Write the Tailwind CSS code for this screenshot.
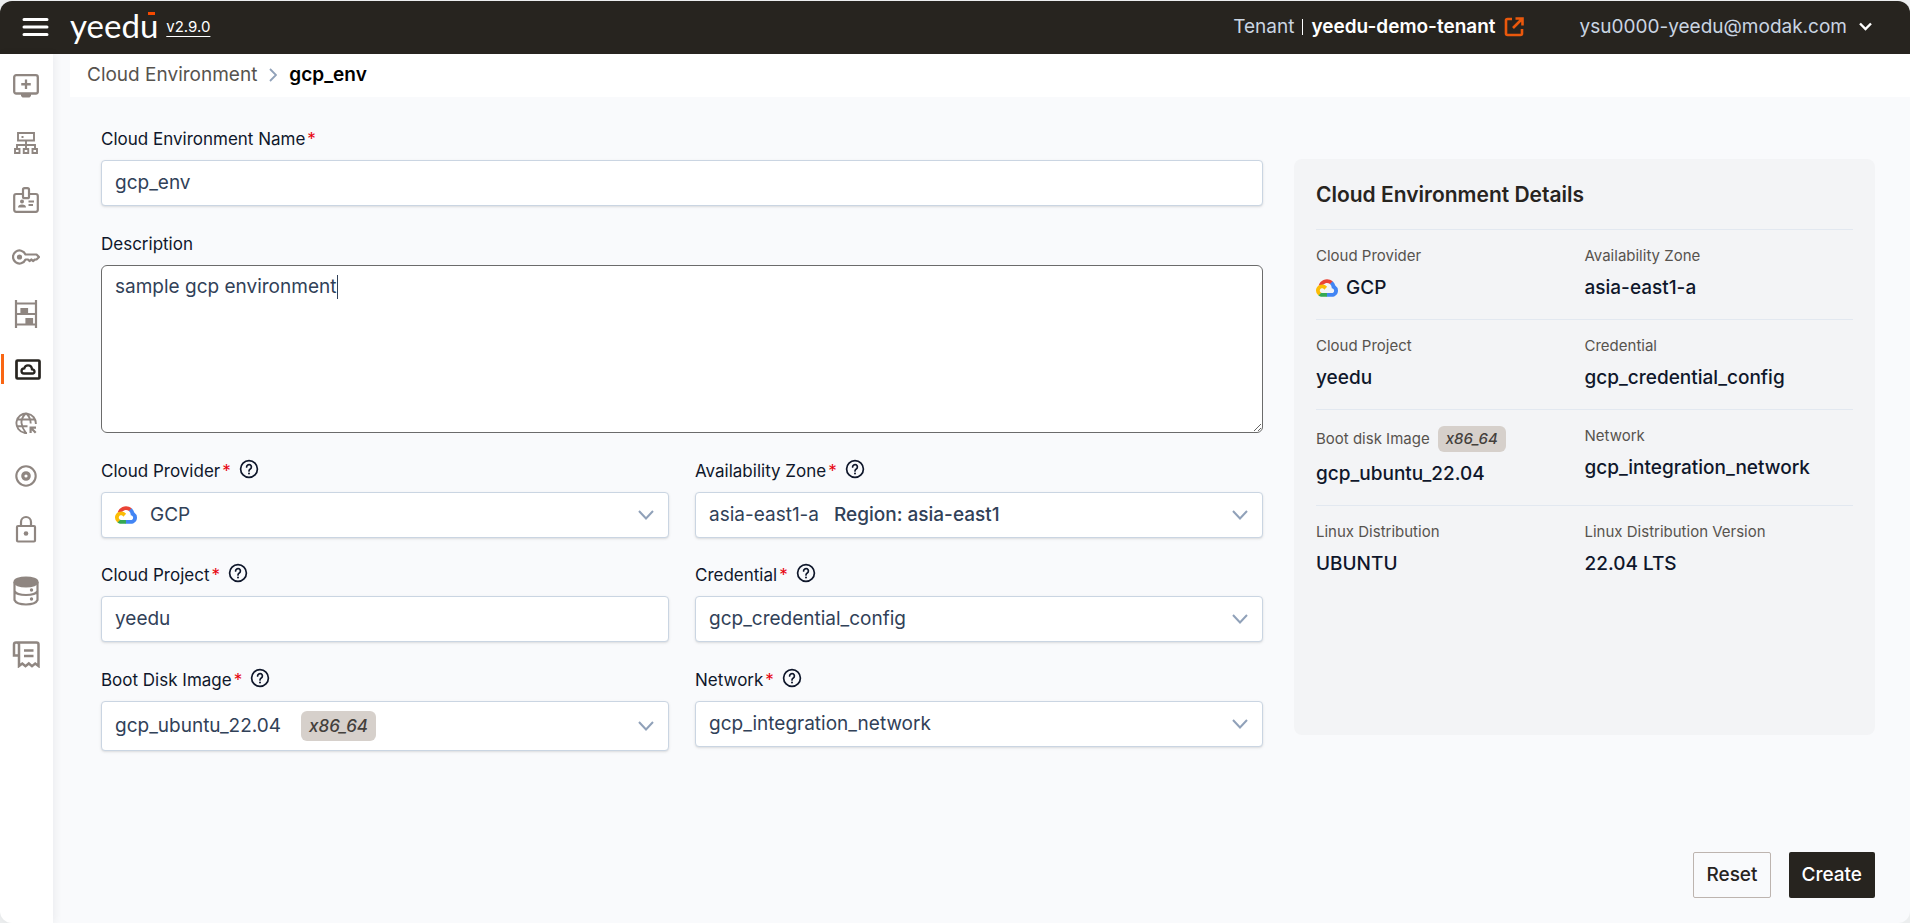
<!DOCTYPE html>
<html lang="en">
<head>
<meta charset="utf-8">
<meta name="viewport" content="width=device-width, initial-scale=1">
<title>yeedu - Cloud Environment</title>
<script src="https://cdn.jsdelivr.net/npm/@tailwindcss/browser@4"></script>
</head>
<body class="bg-[#eceeef] font-['Inter',sans-serif] text-slate-900">
<svg class="hidden" aria-hidden="true">
  <symbol id="help" viewBox="0 0 20 20"><g fill="none" stroke="currentColor" stroke-width="1.7" stroke-linecap="round"><circle cx="10" cy="10" r="8.4"/><path d="M7.600 8a2.400 2.400 0 1 1 3.700 2c-.9.6-1.300 1-1.300 1.900"/></g><circle cx="10" cy="14.400" r="1" fill="currentColor"/></symbol>
  <symbol id="down" viewBox="0 0 16 10"><path d="M1 1l7 7.500 7-7.500" fill="none" stroke="currentColor" stroke-width="2"/></symbol>
  <symbol id="gcp" viewBox="0 0 256 206"><path fill="#EA4335" d="M170.252 56.819l22.253-22.253 1.483-9.370C153.437-11.677 88.976-7.496 52.420 33.920 42.267 45.423 34.734 59.764 30.717 74.573l7.970-1.123 44.505-7.340 3.436-3.513c19.797-21.742 53.270-24.667 76.128-6.168l7.496.39z"/><path fill="#4285F4" d="M224.205 73.918a100.249 100.249 0 0 0-30.217-48.722l-31.232 31.232a55.515 55.515 0 0 1 20.379 44.037v5.544c15.350 0 27.797 12.450 27.797 27.796 0 15.352-12.446 27.573-27.797 27.573h-55.671l-5.466 5.934v33.340l5.466 5.231h55.670c39.930.311 72.553-31.494 72.864-71.424a72.303 72.303 0 0 0-31.793-60.541"/><path fill="#34A853" d="M71.870 205.796h55.593V161.290H71.870a27.275 27.275 0 0 1-11.400-2.498l-7.887 2.420-22.409 22.253-1.952 7.574c12.567 9.489 27.900 14.825 43.648 14.757"/><path fill="#FBBC05" d="M71.870 61.425C31.940 61.663-.237 94.228.001 134.158a72.301 72.301 0 0 0 28.222 56.880l32.248-32.246c-13.990-6.322-20.208-22.786-13.887-36.776 6.320-13.990 22.786-20.208 36.775-13.888a27.796 27.796 0 0 1 13.887 13.888l32.248-32.248A72.224 72.224 0 0 0 71.870 61.425"/></symbol>
</svg>
<div class="flex min-h-screen flex-col pt-px">
  <header class="flex h-[53px] items-center rounded-t-xl bg-[#27241f] pb-0.5 pl-[22px] pr-[38px] text-[19px] leading-7 text-slate-300">
    <button aria-label="Menu" class="text-white"><svg class="h-5 w-[27px]" viewBox="0 0 27 20" fill="none" stroke="currentColor" stroke-width="3" stroke-linecap="round"><path d="M2 2.500h23M2 10h23M2 17.500h23"/></svg></button>
    <a href="#" class="relative ml-[21px] pb-0.5 font-['Lato',sans-serif] text-[33px] leading-none text-white">yeedu<span class="absolute right-[3px] top-[3px] h-[3px] w-[7px] bg-orange-600"></span></a>
    <a href="#" class="ml-2 text-[15px] leading-6 text-white underline underline-offset-4">v2.9.0</a>
    <div class="ml-auto flex items-center">
      <span>Tenant</span>
      <span class="mx-2 h-4 w-px bg-white"></span>
      <span class="font-semibold text-white">yeedu-demo-tenant</span>
      <a href="#" aria-label="Open tenant" class="ml-2 text-[#ea580c]"><svg class="size-5" viewBox="0 0 20 20" fill="none" stroke="currentColor" stroke-width="2.600"><path d="M8 2H3.500Q2 2 2 3.500v13Q2 18 3.500 18h13q1.500 0 1.500-1.500V12M11.500 1.500h7v7M18 2L9 11"/></svg></a>
      <button class="ml-14 flex items-center gap-3">ysu0000-yeedu@modak.com<svg class="h-[9px] w-[13px] text-white" viewBox="0 0 13 9" fill="none" stroke="currentColor" stroke-width="2.400"><path d="M1 1.500l5.500 5.500L12 1.500"/></svg></button>
    </div>
  </header>
  <div class="flex grow">
    <nav aria-label="Main" class="z-10 w-[53px] shrink-0 rounded-bl-xl bg-white pr-px pt-[3px] text-[#8f8681] shadow-[2px_0_8px_rgba(15,23,42,0.06)]">
      <ul>
        <li class="flex h-[57px] items-center justify-center"><a href="#" aria-label="Workspace"><svg class="h-6 w-[26px]" viewBox="0 0 26 24" fill="none" stroke="currentColor" stroke-width="2.300"><rect x="1.200" y="1.200" width="23.600" height="18.300" rx="2"/><path d="M13 5.500v9.500M8.250 10.250h9.500"/><path d="M8 20h10v2l-1.500 1.500h-7L8 22z" fill="currentColor" stroke="none"/></svg></a></li>
        <li class="flex h-[57px] items-center justify-center"><a href="#" aria-label="Clusters"><svg class="h-[22px] w-6" viewBox="0 0 24 22" fill="none" stroke="currentColor" stroke-width="1.900"><path d="M4 1h16v7.500H4zM12 8.500V17M3 17v-4h18v4M1 17h4.500v4H1zM9.750 17h4.500v4h-4.500zM18.500 17H23v4h-4.500z"/><path d="M7.500 4h2v2h-2z" fill="currentColor" stroke="none"/></svg></a></li>
        <li class="flex h-[57px] items-center justify-center"><a href="#" aria-label="Credentials"><svg class="h-[26px] w-[26px]" viewBox="0 0 26 26" fill="none" stroke="currentColor" stroke-width="2.200"><path d="M10 7H3.200q-2 0-2 2v13.800q0 2 2 2h19.600q2 0 2-2V9q0-2-2-2H16"/><rect x="10" y="1.200" width="6" height="10" rx="1.500"/><path d="M15.500 14.500H21M15.500 18H20" stroke-width="1.800"/><circle cx="9" cy="14.500" r="2" fill="currentColor" stroke="none"/><path d="M5 20.500q0-3 4-3t4 3z" fill="currentColor" stroke="none"/></svg></a></li>
        <li class="flex h-[57px] items-center justify-center"><a href="#" aria-label="Keys"><svg class="h-4 w-7" viewBox="0 0 28 16" fill="none" stroke="currentColor" stroke-width="2.200" stroke-linejoin="round"><path d="M13.500 5.500A6.500 6.500 0 1 0 13.500 10.500H16l1.500 1.500 2-1.500 1.500 1.500 2-1.500h1.500L27 8l-2.500-2.500z"/><circle cx="7.500" cy="8" r="2.600" fill="currentColor" stroke="none"/></svg></a></li>
        <li class="flex h-[57px] items-center justify-center"><a href="#" aria-label="Object storage"><svg class="h-7 w-6" viewBox="0 0 24 28" fill="none" stroke="currentColor" stroke-width="2.200"><path d="M2 0v28M22 0v28M2 3.500h20M2 14h20M2 24.500h20"/><path d="M7.500 9h5.500v5H7.500zM12.500 19h5.500v5h-5.500z" fill="currentColor"/></svg></a></li>
        <li class="relative flex h-[54px] items-center justify-center pl-1 text-[#27241f]"><span class="absolute left-px h-[30px] w-[3px] bg-[#f96613]"></span><a href="#" aria-label="Cloud environments" aria-current="page"><svg class="h-[21px] w-[26px]" viewBox="0 0 26 21" fill="none" stroke="currentColor" stroke-width="2.700"><rect x="1.500" y="1.500" width="23" height="18" rx="1"/><path d="M9 14.500h8.500q2 0 2-2t-2.500-2.200q-.3-4-4-4-3 0-3.700 3Q6.500 9.500 6.500 12 6.500 14.500 9 14.500z" stroke-width="2.300"/></svg></a></li>
        <li class="flex h-[54px] items-center justify-center"><a href="#" aria-label="Networks"><svg class="size-[22px]" viewBox="0 0 22 22" fill="none" stroke="currentColor" stroke-width="1.900"><path d="M12 21Q10.500 21.200 9.500 20.800A9.700 9.700 0 1 1 20.800 12M2 7.500h18M1.500 14.200h11M11 1.300Q6 6 6.500 11T11 21M11 1.300Q15.500 5 15.700 11.500"/><path d="M14.500 14.500h6.500v2.200h-2.700l3.200 3.200-1.600 1.600-3.200-3.200v2.700h-2.200z" fill="currentColor" stroke="none"/></svg></a></li>
        <li class="flex h-[52px] items-center justify-center"><a href="#" aria-label="Boot disk images"><svg class="size-[22px]" viewBox="0 0 22 22" fill="none" stroke="currentColor"><circle cx="11" cy="11" r="9.700" stroke-width="2.100"/><circle cx="11" cy="11" r="3.200" stroke-width="3.200"/></svg></a></li>
        <li class="flex h-[54px] items-center justify-center"><a href="#" aria-label="Secrets"><svg class="h-7 w-[22px]" viewBox="0 0 22 28" fill="none" stroke="currentColor" stroke-width="2.200"><rect x="2" y="11" width="18" height="15.500" rx="1"/><path d="M6 11V7a5 5 0 0 1 10 0v4"/><circle cx="11" cy="18.500" r="2.300" fill="currentColor" stroke="none"/></svg></a></li>
        <li class="flex h-[70px] items-center justify-center"><a href="#" aria-label="Metastore"><svg class="h-[30px] w-[26px]" viewBox="0 0 26 30" fill="none" stroke="currentColor" stroke-width="2.200"><ellipse cx="13" cy="6" rx="11.500" ry="4.500" fill="currentColor"/><path d="M1.500 6v18q2 4.500 11.500 4.500T24.500 24V6M1.500 15q2 4 11.500 4t11.500-4"/><circle cx="18.500" cy="14" r="1.700" fill="currentColor" stroke="none"/><circle cx="18.500" cy="23" r="1.700" fill="currentColor" stroke="none"/></svg></a></li>
        <li class="flex h-14 items-center justify-center"><a href="#" aria-label="Billing"><svg class="h-[27px] w-7" viewBox="0 0 28 27" fill="none" stroke="currentColor" stroke-width="2.500"><path d="M7 14.500H2V3.500Q2 1.500 4 1.500h20.500q2 0 2 2V25l-3.300-2.500-3.200 2.700-3.200-2.700-3.300 2.700-3.200-2.700L7 25V3.500q0-2-2.500-2"/><path d="M12 9.500h9.500M12 15h9.500"/></svg></a></li>
      </ul>
    </nav>
    <main class="flex min-w-0 grow flex-col rounded-br-xl bg-[#f9fafc] pl-[17px]">
      <nav aria-label="Breadcrumb" class="flex h-[43px] items-center bg-white pb-0.5 pl-[17px] text-[19px] leading-7">
        <a href="#" class="text-[#57534e]">Cloud Environment</a>
        <svg class="mx-3 h-[14px] w-2 text-slate-400" viewBox="0 0 8 14" fill="none" stroke="currentColor" stroke-width="1.800"><path d="M1 1l6 6-6 6"/></svg>
        <span class="font-semibold text-black">gcp_env</span>
      </nav>
      <form class="flex grow flex-col pb-[25px] pl-[31px] pr-[35px] pt-[30px]">
        <div class="grid grid-cols-[2fr_1fr] items-start gap-[31px]">
          <div class="grid grid-cols-2 items-start gap-[26px] text-[19px] leading-7 text-slate-700">
            <div class="col-span-2 flex flex-col gap-[9px]">
              <label for="name" class="flex h-6 items-center gap-0.5 text-[17px] leading-6 text-slate-900">Cloud Environment Name <span class="text-red-600">*</span></label>
              <input id="name" type="text" value="gcp_env" class="h-[46px] w-full rounded border border-slate-300 bg-white px-[13px] pb-0.5 shadow-sm">
            </div>
            <div class="col-span-2 flex flex-col gap-[9px]">
              <label for="desc" class="flex h-6 items-center text-[17px] leading-6 text-slate-900">Description</label>
              <div class="relative flex">
                <textarea id="desc" class="h-[168px] w-full resize-y rounded-md border border-[#6b6b6b] bg-white px-[13px] py-[7px]">sample gcp environment</textarea>
                <span class="absolute left-[236px] top-[10px] h-6 w-px bg-slate-700"></span>
              </div>
            </div>
            <div class="flex flex-col gap-[9px]">
              <div class="flex h-6 items-start gap-2 text-[17px] leading-6 text-slate-900"><label for="provider" class="flex gap-0.5">Cloud Provider <span class="text-red-600">*</span></label><button type="button" aria-label="Help"><svg class="size-5"><use href="#help"/></svg></button></div>
              <div class="relative">
                <select id="provider" class="h-[46px] w-full appearance-none rounded border border-slate-300 bg-white pl-12 pr-10 shadow-sm"><option>GCP</option></select>
                <svg class="pointer-events-none absolute left-[14px] top-[13px] h-5 w-[22px]"><use href="#gcp"/></svg>
                <svg class="pointer-events-none absolute right-[15px] top-[18px] h-[10px] w-4 text-slate-400"><use href="#down"/></svg>
              </div>
            </div>
            <div class="flex flex-col gap-[9px]">
              <div class="flex h-6 items-start gap-2 text-[17px] leading-6 text-slate-900"><label for="zone" class="flex gap-0.5">Availability Zone <span class="text-red-600">*</span></label><button type="button" aria-label="Help"><svg class="size-5"><use href="#help"/></svg></button></div>
              <div class="relative">
                <select id="zone" class="h-[46px] w-full appearance-none rounded border border-slate-300 bg-white pl-[13px] pr-10 shadow-sm"><option>asia-east1-a</option></select>
                <span class="pointer-events-none absolute left-[139px] top-[9px] font-medium">Region: asia-east1</span>
                <svg class="pointer-events-none absolute right-[15px] top-[18px] h-[10px] w-4 text-slate-400"><use href="#down"/></svg>
              </div>
            </div>
            <div class="-mt-px flex flex-col gap-[9px]">
              <div class="flex h-6 items-start gap-2 text-[17px] leading-6 text-slate-900"><label for="project" class="flex gap-0.5">Cloud Project <span class="text-red-600">*</span></label><button type="button" aria-label="Help"><svg class="size-5"><use href="#help"/></svg></button></div>
              <input id="project" type="text" value="yeedu" class="h-[46px] w-full rounded border border-slate-300 bg-white px-[13px] pb-0.5 shadow-sm">
            </div>
            <div class="-mt-px flex flex-col gap-[9px]">
              <div class="flex h-6 items-start gap-2 text-[17px] leading-6 text-slate-900"><label for="credential" class="flex gap-0.5">Credential <span class="text-red-600">*</span></label><button type="button" aria-label="Help"><svg class="size-5"><use href="#help"/></svg></button></div>
              <div class="relative">
                <select id="credential" class="h-[46px] w-full appearance-none rounded border border-slate-300 bg-white pl-[13px] pr-10 shadow-sm"><option>gcp_credential_config</option></select>
                <svg class="pointer-events-none absolute right-[15px] top-[18px] h-[10px] w-4 text-slate-400"><use href="#down"/></svg>
              </div>
            </div>
            <div class="flex flex-col gap-[9px]">
              <div class="flex h-6 items-start gap-2 text-[17px] leading-6 text-slate-900"><label for="image" class="flex gap-0.5">Boot Disk Image <span class="text-red-600">*</span></label><button type="button" aria-label="Help"><svg class="size-5"><use href="#help"/></svg></button></div>
              <div class="relative">
                <select id="image" class="h-[50px] w-full appearance-none rounded border border-slate-300 bg-white pl-[13px] pr-10 shadow-sm"><option>gcp_ubuntu_22.04</option></select>
                <span class="pointer-events-none absolute left-[200px] top-[10px] flex h-[30px] items-center rounded-md bg-[#d6d0cb] px-2 text-[17px] font-medium italic text-[#44403c]">x86_64</span>
                <svg class="pointer-events-none absolute right-[15px] top-5 h-[10px] w-4 text-slate-400"><use href="#down"/></svg>
              </div>
            </div>
            <div class="flex flex-col gap-[9px]">
              <div class="flex h-6 items-start gap-2 text-[17px] leading-6 text-slate-900"><label for="network" class="flex gap-0.5">Network <span class="text-red-600">*</span></label><button type="button" aria-label="Help"><svg class="size-5"><use href="#help"/></svg></button></div>
              <div class="relative">
                <select id="network" class="h-[46px] w-full appearance-none rounded border border-slate-300 bg-white pl-[13px] pr-10 shadow-sm"><option>gcp_integration_network</option></select>
                <svg class="pointer-events-none absolute right-[15px] top-[18px] h-[10px] w-4 text-slate-400"><use href="#down"/></svg>
              </div>
            </div>
          </div>
          <section class="mt-8 min-h-[576px] rounded-lg bg-[#f3f4f6] px-[22px] pt-5">
            <h2 class="pb-[18px] text-[21px] leading-8 font-semibold text-[#27241f]">Cloud Environment Details</h2>
            <dl class="divide-y divide-slate-200 border-t border-slate-200 text-[19px] leading-[30px] font-medium text-slate-900">
              <div class="grid grid-cols-2 pb-4 pt-[14px]">
                <div><dt class="text-[15px] leading-6 font-normal text-[#57534e]">Cloud Provider</dt><dd class="mt-[5px] flex items-center gap-2"><svg class="h-5 w-[22px]"><use href="#gcp"/></svg>GCP</dd></div>
                <div><dt class="text-[15px] leading-6 font-normal text-[#57534e]">Availability Zone</dt><dd class="mt-[5px]">asia-east1-a</dd></div>
              </div>
              <div class="grid grid-cols-2 pb-4 pt-[14px]">
                <div><dt class="text-[15px] leading-6 font-normal text-[#57534e]">Cloud Project</dt><dd class="mt-[5px]">yeedu</dd></div>
                <div><dt class="text-[15px] leading-6 font-normal text-[#57534e]">Credential</dt><dd class="mt-[5px]">gcp_credential_config</dd></div>
              </div>
              <div class="grid grid-cols-2 pb-4 pt-[14px]">
                <div><dt class="flex h-[30px] items-center gap-2 text-[15px] leading-[26px] font-normal text-[#57534e]">Boot disk Image <span class="rounded-md bg-[#d6d0cb] px-2 font-medium italic text-[#44403c]">x86_64</span></dt><dd class="mt-[5px]">gcp_ubuntu_22.04</dd></div>
                <div><dt class="text-[15px] leading-6 font-normal text-[#57534e]">Network</dt><dd class="mt-[5px]">gcp_integration_network</dd></div>
              </div>
              <div class="grid grid-cols-2 pb-4 pt-[14px]">
                <div><dt class="text-[15px] leading-6 font-normal text-[#57534e]">Linux Distribution</dt><dd class="mt-[5px]">UBUNTU</dd></div>
                <div><dt class="text-[15px] leading-6 font-normal text-[#57534e]">Linux Distribution Version</dt><dd class="mt-[5px]">22.04 LTS</dd></div>
              </div>
            </dl>
          </section>
        </div>
        <div class="mt-auto flex justify-end gap-[18px] pt-8 text-[19px] leading-7 font-medium">
          <button type="reset" class="h-[46px] rounded-xs border border-[#bdb4af] px-3 text-[#27241f]">Reset</button>
          <button type="submit" class="h-[46px] rounded-xs bg-[#27241f] px-[13px] text-white">Create</button>
        </div>
      </form>
    </main>
  </div>
</div>
</body>
</html>
